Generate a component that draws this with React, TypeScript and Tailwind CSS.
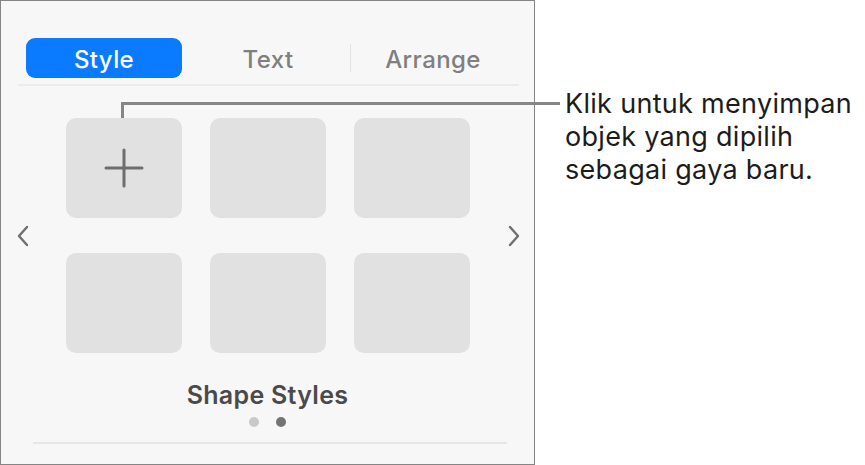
import React from "react";

const font = { fontFamily: "Inter, 'Noto Sans', sans-serif" };

function Chevron({ dir }: { dir: "left" | "right" }) {
  return (
    <svg width="14" height="22" viewBox="0 0 14 22" fill="none">
      {dir === "left" ? (
        <path d="M11 2 L3 11 L11 20" stroke="#6f6f6f" strokeWidth="2.4" strokeLinecap="round" strokeLinejoin="round" />
      ) : (
        <path d="M3 2 L11 11 L3 20" stroke="#6f6f6f" strokeWidth="2.4" strokeLinecap="round" strokeLinejoin="round" />
      )}
    </svg>
  );
}

function Tile({ plus }: { plus?: boolean }) {
  return (
    <div className="w-[116px] h-[100px] rounded-[10px] bg-[#e1e1e1] flex items-center justify-center">
      {plus && (
        <svg width="40" height="40" viewBox="0 0 40 40">
          <path d="M20 2 V38 M2 20 H38" stroke="#6e6e6e" strokeWidth="3" strokeLinecap="round" />
        </svg>
      )}
    </div>
  );
}

export default function App() {
  return (
    <div className="relative w-[865px] h-[465px] bg-white flex flex-row" style={font}>
      <div className="w-[535px] h-[465px] border border-[#858585] bg-[#f7f7f7] flex flex-col">
        {/* tabs */}
        <div className="mt-[37px] pl-[25px] flex flex-row items-center h-[40px]">
          <div className="w-[156px] h-[40px] pt-[3px] rounded-[9px] bg-[#0a7bff] flex items-center justify-center text-white text-[24px] font-medium tracking-[0.4px]">
            Style
          </div>
          <div className="w-[168px] h-[40px] pt-[3px] pl-[4px] flex items-center justify-center text-[#7f7f7f] text-[24px] font-medium tracking-[0.4px]">
            Text
          </div>
          <div className="w-px h-[28px] bg-[#e3e3e3]" />
          <div className="w-[164px] h-[40px] pt-[3px] flex items-center justify-center text-[#7f7f7f] text-[24px] font-medium tracking-[0.4px]">
            Arrange
          </div>
        </div>
        <div className="mt-[6px] ml-[17px] w-[501px] h-[2px] bg-[#ebebeb]" />
        {/* tiles */}
        <div className="mt-[32px] pl-[15px] flex flex-row items-center">
          <Chevron dir="left" />
          <div className="ml-[36px] grid grid-cols-[116px_116px_116px] gap-x-[28px] gap-y-[35px]">
            <Tile plus />
            <Tile />
            <Tile />
            <Tile />
            <Tile />
            <Tile />
          </div>
          <div className="ml-[37px]">
            <Chevron dir="right" />
          </div>
        </div>
        <div className="mt-[27px] flex justify-center text-[25px] font-semibold text-[#4a4a4a] leading-[30px] tracking-[0.3px]">
          Shape Styles
        </div>
        <div className="mt-[7px] flex justify-center gap-[17px]">
          <div className="w-[10px] h-[10px] rounded-full bg-[#c9c9c9]" />
          <div className="w-[10px] h-[10px] rounded-full bg-[#747474]" />
        </div>
        <div className="mt-[15px] ml-[32px] w-[474px] h-[2px] bg-[#e6e6e6]" />
      </div>
      <div className="ml-[30px] mt-[87px] text-[27px] leading-[33px] tracking-[0.3px] text-[#1c1c1c]">
        Klik untuk menyimpan
        <br />
        objek yang dipilih
        <br />
        sebagai gaya baru.
      </div>
      {/* callout line */}
      <div className="absolute left-[121px] top-[102px] w-[439px] h-[3px] bg-[#868686]" />
      <div className="absolute left-[121px] top-[102px] w-[3px] h-[16px] bg-[#868686]" />
    </div>
  );
}
